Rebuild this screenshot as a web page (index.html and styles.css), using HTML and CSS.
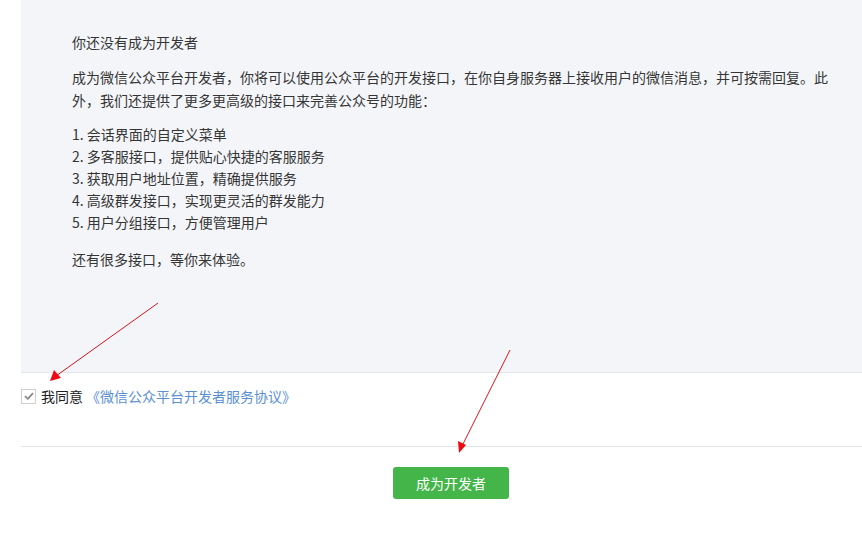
FILE: index.html
```html
<!DOCTYPE html>
<html lang="zh-CN">
<head>
<meta charset="utf-8">
<link rel="stylesheet" href="styles.css">
</head>
<body>
<div class="page">
  <div class="panel">
    <p class="title">你还没有成为开发者</p>
    <p class="intro">成为微信公众平台开发者，你将可以使用公众平台的开发接口，在你自身服务器上接收用户的微信消息，并可按需回复。此外，我们还提供了更多更高级的接口来完善公众号的功能：</p>
    <ul class="features">
      <li>1. 会话界面的自定义菜单</li>
      <li>2. 多客服接口，提供贴心快捷的客服服务</li>
      <li>3. 获取用户地址位置，精确提供服务</li>
      <li>4. 高级群发接口，实现更灵活的群发能力</li>
      <li>5. 用户分组接口，方便管理用户</li>
    </ul>
    <p class="more">还有很多接口，等你来体验。</p>
  </div>
  <label class="agree">
    <span class="check"><svg width="10" height="8" viewBox="0 0 10 8"><path d="M1 4.2 L3.8 6.8 L9 1.2" fill="none" stroke="#8a8a8a" stroke-width="1.8"/></svg></span>
    <span class="agree-text">我同意</span>
    <a class="link">《微信公众平台开发者服务协议》</a>
  </label>
  <div class="footer">
    <button class="btn">成为开发者</button>
  </div>
  <svg class="arrows" width="862" height="541" viewBox="0 0 862 541">
    <line x1="158" y1="303" x2="56" y2="376" stroke="#d8141c" stroke-width="1"/>
    <polygon points="50,381 54,370 61,378" fill="#ee0a12"/>
    <line x1="510" y1="350" x2="462" y2="446" stroke="#d8141c" stroke-width="1"/>
    <polygon points="459,453 458,441 466,445" fill="#ee0a12"/>
  </svg>
</div>
</body>
</html>
```
FILE: styles.css
```css
html, body {
  margin: 0;
  padding: 0;
  background: #ffffff;
  overflow: hidden;
}
body {
  font-family: "Microsoft YaHei", "Noto Sans CJK SC", "Noto Sans", sans-serif;
  font-size: 14px;
  color: #353535;
}
.page {
  position: relative;
  width: 862px;
  height: 541px;
}
.panel {
  margin-left: 21px;
  height: 373px;
  box-sizing: border-box;
  background: #f4f5f9;
  border-bottom: 1px solid #e4e6ea;
  padding: 31px 30px 0 51px;
}
.panel p, .panel ul {
  margin: 0;
  padding: 0;
}
.title {
  line-height: 22px;
}
.intro {
  margin-top: 13px !important;
  line-height: 23px;
}
.features {
  list-style: none;
  margin-top: 11px !important;
  line-height: 22px;
}
.more {
  margin-top: 15px !important;
  line-height: 22px;
}
.agree {
  display: flex;
  align-items: center;
  margin: 12px 0 0 21px;
  height: 22px;
}
.check {
  width: 13px;
  height: 13px;
  border: 1px solid #cfcfcf;
  background: #fff;
  display: flex;
  align-items: center;
  justify-content: center;
  box-sizing: content-box;
}
.agree-text {
  margin-left: 5px;
  color: #222;
}
.link {
  color: #5b8fd3;
  margin-left: 3px;
}
.footer {
  margin: 39px 0 0 21px;
  border-top: 1px solid #e4e6ea;
  padding: 20px 0 0 372px;
}
.btn {
  width: 116px;
  height: 32px;
  background: #44b549;
  border: none;
  border-radius: 3px;
  color: #fff;
  font-family: inherit;
  font-size: 14px;
  padding: 0;
}
.arrows {
  position: absolute;
  left: 0;
  top: 0;
  pointer-events: none;
}
```
